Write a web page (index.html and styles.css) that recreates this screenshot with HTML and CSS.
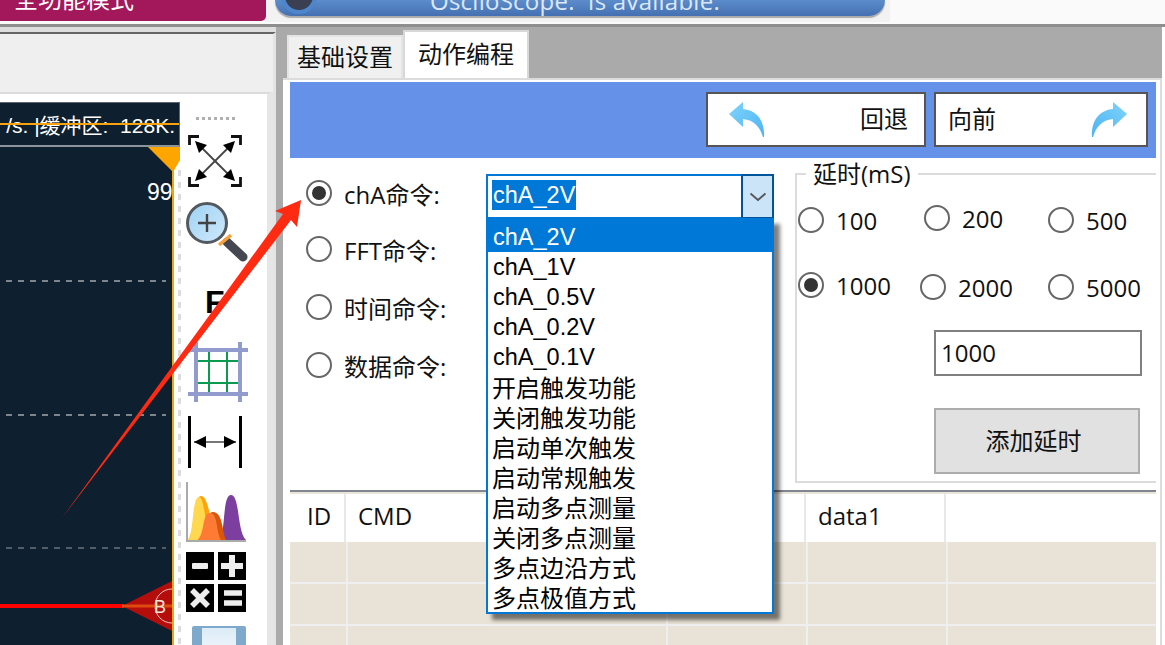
FILE: index.html
```
<!DOCTYPE html>
<html lang="zh">
<head>
<meta charset="utf-8">
<title>动作编程</title>
<link rel="stylesheet" href="styles.css">
</head>
<body>
<div class="page">
  <header class="top">
    <div class="mode"><span>全功能模式</span></div>
    <div class="pill-wrap">
      <div class="pill">
        <span class="pill-dot"></span>
        <span class="pill-text">OsciloScope:&nbsp; Is available.</span>
      </div>
    </div>
    <div class="top-rest"></div>
  </header>

  <main class="main">
    <section class="left">
      <div class="left-head"></div>
      <div class="left-body">
        <div class="scope">
          <div class="scope-head"><span class="scope-info">/s. |缓冲区:&nbsp; 128K.</span></div>
          <div class="chart">
            <span class="chart-val">999</span>
            <span class="grid-line g1"></span>
            <span class="grid-line g2"></span>
            <span class="grid-line g3"></span>
            <span class="trace"></span>
            <svg class="marker" width="54" height="54" viewBox="0 0 54 54">
              <polygon points="0,27 50,2 50,52" fill="#b50c0c"/>
              <circle cx="50" cy="27" r="17" fill="none" stroke="#f0c8c8" stroke-width="1"/>
              <line x1="0" y1="27" x2="54" y2="27" stroke="#e85a10" stroke-width="3" stroke-opacity=".8"/>
              <text x="32" y="34" class="marker-text">B</text>
            </svg>
          </div>
          <svg class="corner" width="32" height="26" viewBox="0 0 32 26"><polygon points="0,0 32,0 32,13 25,25" fill="#ffa500"/></svg>
        </div>
        <div class="tools">
          <div class="dots"></div>
          <svg class="ico ico-expand" width="54" height="52" viewBox="0 0 54 52">
            <g fill="none" stroke="#111" stroke-width="2.8">
              <path d="M1.5 10V1.5H11"/><path d="M43 1.5H52.5V10"/><path d="M1.5 42V50.5H11"/><path d="M43 50.5H52.5V42"/>
            </g>
            <g stroke="#444" stroke-width="1.8"><line x1="9" y1="8" x2="45" y2="44"/><line x1="45" y1="8" x2="9" y2="44"/></g>
            <g fill="#000">
              <polygon points="7,6 19,10 11,18"/><polygon points="47,6 35,10 43,18"/>
              <polygon points="7,46 19,42 11,34"/><polygon points="47,46 35,42 43,34"/>
            </g>
          </svg>
          <svg class="ico ico-zoom" width="62" height="60" viewBox="0 0 62 60">
            <defs><linearGradient id="lens" x1="0" y1="0" x2="1" y2="1"><stop offset="0" stop-color="#9fd3f5"/><stop offset="1" stop-color="#cfe8fa"/></linearGradient></defs>
            <circle cx="21" cy="21" r="19.5" fill="url(#lens)" stroke="#54585f" stroke-width="3"/>
            <path d="M21 12V30M12 21H30" stroke="#444" stroke-width="2.4"/>
            <line x1="41" y1="40" x2="57" y2="55" stroke="#454850" stroke-width="9" stroke-linecap="round"/>
            <line x1="33" y1="43" x2="45" y2="33" stroke="#f7a13c" stroke-width="3.4"/>
          </svg>
          <span class="tool-f">F</span>
          <svg class="ico ico-grid" width="60" height="60" viewBox="0 0 60 60">
            <g stroke="#0a9a50" stroke-width="2"><path d="M21 9V53M39 9V53M10 19H52M10 41H52"/></g>
            <g stroke="#919bcd" stroke-width="4"><path d="M8 0V60M52 0V60M0 8H60M0 52H60"/></g>
          </svg>
          <svg class="ico ico-fit" width="54" height="52" viewBox="0 0 54 52">
            <path d="M1.5 0V52M52.5 0V52" stroke="#000" stroke-width="3"/>
            <line x1="6" y1="26" x2="48" y2="26" stroke="#777" stroke-width="2"/>
            <polygon points="6,26 18,20 18,32" fill="#000"/><polygon points="48,26 36,20 36,32" fill="#000"/>
          </svg>
          <svg class="ico ico-hist" width="60" height="60" viewBox="0 0 60 60">
            <path d="M1 0V59H60" fill="none" stroke="#aaa" stroke-width="2"/>
            <path d="M2 58C9 50 7 14 15 14C24 14 24 50 34 58Z" fill="#ffa30d"/>
            <path d="M2 58C8 50 6 15 13 15C19 15 19 50 26 58Z" fill="#ffd84f"/>
            <path d="M33 58C40 52 36 13 45 13C54 13 51 50 60 58Z" fill="#7c3fa0"/>
            <path d="M12 58C20 50 18 30 27 30C37 30 36 50 40 58Z" fill="#d8570a"/>
            <path d="M12 58C19 50 16 31 24 31C32 31 30 50 35 58Z" fill="#ff7b35"/>
          </svg>
          <div class="calc">
            <span class="key"><svg width="28" height="28" viewBox="0 0 28 28"><rect x="6" y="11" width="16" height="6" rx="1" fill="#eee"/></svg></span>
            <span class="key"><svg width="28" height="28" viewBox="0 0 28 28"><path d="M14 3V25M3 14H25" stroke="#eee" stroke-width="6"/></svg></span>
            <span class="key"><svg width="28" height="28" viewBox="0 0 28 28"><path d="M6 6L22 22M22 6L6 22" stroke="#eee" stroke-width="5.5"/></svg></span>
            <span class="key"><svg width="28" height="28" viewBox="0 0 28 28"><path d="M6 9H24M6 19H24" stroke="#eee" stroke-width="5.5"/></svg></span>
          </div>
          <div class="floppy"><span class="floppy-label"></span></div>
        </div>
      </div>
    </section>

    <section class="right">
      <div class="tabs">
        <div class="tab">基础设置</div>
        <div class="tab tab-active">动作编程</div>
      </div>
      <div class="panel">
        <div class="panel-inner">
          <div class="bluebar">
            <button class="nav nav-back" type="button">
              <svg width="38" height="36" viewBox="0 0 38 36">
                <defs><linearGradient id="arr" x1="0" y1="0" x2="1" y2="1"><stop offset="0" stop-color="#7fd3fb"/><stop offset="1" stop-color="#4db4f2"/></linearGradient></defs>
                <path d="M1 12L15 0V7C28 8 37 18 36 35L35 35C32 25 26 18 15 17V25Z" fill="url(#arr)"/>
              </svg>
              <span>回退</span>
            </button>
            <button class="nav nav-fwd" type="button">
              <span>向前</span>
              <svg width="38" height="36" viewBox="0 0 38 36">
                <defs><linearGradient id="arr2" x1="1" y1="0" x2="0" y2="1"><stop offset="0" stop-color="#7fd3fb"/><stop offset="1" stop-color="#4db4f2"/></linearGradient></defs>
                <path d="M37 12L23 0V7C10 8 1 18 2 35L3 35C6 25 12 18 23 17V25Z" fill="url(#arr2)"/>
              </svg>
            </button>
          </div>

          <div class="form">
            <div class="cmds">
              <label class="rad-row"><span class="radio on"></span><span>chA命令:</span></label>
              <label class="rad-row"><span class="radio"></span><span>FFT命令:</span></label>
              <label class="rad-row"><span class="radio"></span><span>时间命令:</span></label>
              <label class="rad-row"><span class="radio"></span><span>数据命令:</span></label>
            </div>
            <div class="combo">
              <div class="combo-value"><span class="combo-sel">chA_2V</span></div>
              <div class="combo-btn">
                <svg width="18" height="10" viewBox="0 0 18 10"><path d="M1.5 1.5L9 8L16.5 1.5" fill="none" stroke="#555" stroke-width="1.8"/></svg>
              </div>
            </div>
            <div class="delay">
              <div class="delay-legend">延时(mS)</div>
              <div class="drow drow-a">
                <label class="ditem w126"><span class="radio"></span><span>100</span></label>
                <label class="ditem w124 up"><span class="radio"></span><span>200</span></label>
                <label class="ditem"><span class="radio"></span><span>500</span></label>
              </div>
              <div class="drow drow-b">
                <label class="ditem w122 up"><span class="radio on"></span><span>1000</span></label>
                <label class="ditem w128"><span class="radio"></span><span>2000</span></label>
                <label class="ditem"><span class="radio"></span><span>5000</span></label>
              </div>
              <div class="delay-input">1000</div>
              <button class="delay-add" type="button">添加延时</button>
            </div>

            <ul class="dropdown">
              <li class="active">chA_2V</li>
              <li>chA_1V</li>
              <li>chA_0.5V</li>
              <li>chA_0.2V</li>
              <li>chA_0.1V</li>
              <li class="cn">开启触发功能</li>
              <li class="cn">关闭触发功能</li>
              <li class="cn">启动单次触发</li>
              <li class="cn">启动常规触发</li>
              <li class="cn">启动多点测量</li>
              <li class="cn">关闭多点测量</li>
              <li class="cn">多点边沿方式</li>
              <li class="cn">多点极值方式</li>
            </ul>
          </div>

          <div class="table">
            <div class="thead">
              <div class="th">ID</div>
              <div class="th th-cmd">CMD</div>
              <div class="th"></div>
              <div class="th th-data">data1</div>
              <div class="th th-end"></div>
            </div>
            <div class="tr"><i></i><i></i><i></i><i></i><i></i></div>
            <div class="tr"><i></i><i></i><i></i><i></i><i></i></div>
            <div class="tr"><i></i><i></i><i></i><i></i><i></i></div>
          </div>
        </div>
      </div>
    </section>
  </main>

  <svg class="annot" width="1165" height="645" viewBox="0 0 1165 645">
    <polygon points="62,518 283,214 275,211 301,200 297,227 291,220" fill="#ff2a12"/>
  </svg>
</div>
</body>
</html>
```
FILE: styles.css
```
* { box-sizing: border-box; }
html, body { margin: 0; padding: 0; }
body {
  width: 1165px;
  height: 645px;
  overflow: hidden;
  background: #fff;
  font-family: "Open Sans", "Noto Sans CJK SC", sans-serif;
  font-size: 24px;
  color: #111;
}
.page { position: relative; width: 1165px; height: 645px; overflow: hidden; }

/* top strip */
.top { display: flex; height: 24px; background: #fafafa; overflow: hidden; }
.mode {
  width: 266px; height: 21px; flex: none;
  background: #a3175b; border-bottom-right-radius: 5px;
  padding-left: 14px; color: #fff; font-size: 24px; line-height: 24px;
  overflow: hidden;
}
.mode span { display: block; margin-top: -13px; }
.pill-wrap { width: 624px; height: 22px; flex: none; background: #f2f2f2; padding-left: 9px; }
.pill {
  width: 610px; height: 16px;
  border-radius: 0 0 18px 18px;
  background: linear-gradient(#5c8ccb, #4470b2);
  box-shadow: 0 2px 1px #aaa;
  display: flex; overflow: hidden; position: relative;
}
.pill-dot {
  width: 36px; height: 36px; margin: -22px 0 0 6px; flex: none;
  border-radius: 50%; background: #3b3f52; border: 4px solid #4d86cc;
}
.pill-text {
  margin-left: 113px; color: #dce8f7; font-family: "Open Sans", sans-serif;
  font-size: 24px; letter-spacing: .25px; line-height: 20px; margin-top: -9px; white-space: nowrap;
}
.top-rest { flex: 1; }

/* main */
.main { display: flex; height: 621px; border-top: 3px solid #8e8e8e; background: #dedede; }

/* left */
.left { width: 276px; flex: none; display: flex; flex-direction: column; margin-top: 5px; border-right: 3px solid #e4e4e4; border-top: 2px solid #666; background: #efefef; position: relative; }
.left-head { height: 58px; flex: none; }
.left-body {
  flex: 1; display: flex; width: 273px;
  background: #fff;
  border-top: 2px solid #dcdcdc;
  border-right: 6px solid #e6e6e6;
  padding-top: 8px;
}
.scope { width: 180px; flex: none; position: relative; display: flex; flex-direction: column; }
.scope-head {
  height: 45px; flex: none;
  background: #0e1f30;
  border-top: 1px solid #5b6670;
  border-right: 1px solid #5b6670;
  border-bottom: 2px solid #8c949b;
  display: flex; justify-content: flex-end; align-items: center;
  overflow: hidden; position: relative;
  padding-right: 4px; color: #fff; font-size: 21px; white-space: nowrap;
  font-family: "Liberation Sans", "Noto Sans CJK SC", sans-serif;
}
.scope-head::after {
  content: ""; position: absolute; left: 0; right: 0; top: 20px; height: 2px; background: #f7a30f;
}
.chart {
  flex: 1; width: 174px; background: #0e1f30; border-right: 2px solid #efa416;
  position: relative; overflow: hidden;
}
.chart-val { position: absolute; left: 147px; top: 31px; color: #fff; font-size: 23px; line-height: 28px; font-family: "Liberation Sans", sans-serif; }
.grid-line {
  position: absolute; left: 6px; width: 160px; height: 2px;
  background: repeating-linear-gradient(90deg, #7d868d 0 6px, transparent 6px 12px);
}
.g1 { top: 133px; }
.g2 { top: 267px; }
.g3 { top: 400px; opacity: .6; }
.trace { position: absolute; left: 0; top: 457px; width: 124px; height: 4px; background: #ff0000; }
.marker { position: absolute; left: 122px; top: 432px; }
.marker-text { fill: #f6e6d8; font: 18px "Liberation Sans", sans-serif; }
.corner { position: absolute; left: 148px; top: 45px; }

.tools { position: relative; flex: 1; display: flex; flex-direction: column; align-items: flex-start; padding-left: 6px; min-width: 0; }
.tools::before {
  content: ""; position: absolute; left: -2px; top: 68px; bottom: 0; width: 3px;
  background: repeating-linear-gradient(#dcdcdc 0 6px, transparent 6px 12px);
}
.ico { display: block; flex: none; overflow: visible; }
.dots {
  width: 42px; height: 3px; margin: 15px 0 0 10px; flex: none;
  background: repeating-linear-gradient(90deg, #b0b0b0 0 3px, transparent 3px 6px);
}
.ico-expand { margin: 15px 0 0 2px; }
.ico-zoom { margin-top: 15px; }
.tool-f { font: bold 32px/32px "Liberation Sans", sans-serif; color: #000; margin: 24px 0 0 19px; flex: none; }
.ico-grid { margin: 24px 0 0 2px; }
.ico-fit { margin: 14px 0 0 2px; }
.ico-hist { margin-top: 14px; }
.calc { display: grid; grid-template-columns: 28px 28px; gap: 4px; margin-top: 10px; flex: none; }
.key { width: 28px; height: 28px; background: #000; display: block; }
.key svg { display: block; }
.floppy { width: 54px; height: 30px; margin: 14px 0 0 6px; flex: none; background: #7fa9cb; border-radius: 2px 2px 0 0; padding: 2px 10px 0; }
.floppy-label { display: block; height: 100%; background: linear-gradient(#dcebf6, #f3f8fc); }

/* right */
.right { width: 889px; flex: none; display: flex; flex-direction: column; background: #fff; }
.tabs { height: 51px; flex: none; background: #aaa; margin-right: 3px; display: flex; align-items: flex-end; padding-left: 11px; }
.tab {
  width: 116px; height: 43px; background: #f0f0f0; border: 2px solid #e4e4e4; border-bottom: 0;
  font-family: "Noto Sans CJK SC", sans-serif; font-size: 24px; line-height: 38px; text-align: center; color: #111;
  white-space: nowrap;
}
.tab-active { width: 126px; height: 48px; background: #fff; border-color: #d8d8d8; line-height: 42px; }
.panel { flex: 1; margin-right: 3px; border-left: 7px solid #aaa; border-right: 2px solid #dcdcdc; min-height: 0; background: #fff; }
.panel-inner { height: 100%; border-top: 2px solid #dcdcdc; padding: 2px 4px 0 7px; display: flex; flex-direction: column; }

.bluebar { height: 76px; flex: none; background: #6592e8; display: flex; justify-content: flex-end; gap: 8px; padding: 10px 8px 0; }
.nav {
  height: 55px; background: #fff; border: 2px solid #555; padding: 0;
  display: flex; align-items: center; justify-content: space-between;
  font-family: "Noto Sans CJK SC", sans-serif; font-size: 24px; color: #111;
}
.nav span { margin-bottom: 4px; }
.nav-back { width: 220px; padding: 0 16px 0 20px; }
.nav-fwd { width: 214px; padding: 0 18px 0 12px; }

.form { height: 332px; flex: none; display: flex; position: relative; }
.cmds { width: 196px; flex: none; padding: 7px 0 0 16px; display: grid; grid-template-rows: 56px 56px 60px 56px; align-content: start; }
.rad-row { display: flex; align-items: center; gap: 12px; white-space: nowrap; }
.radio { width: 26px; height: 26px; flex: none; border-radius: 50%; border: 2px solid #666; background: #fff; display: block; position: relative; }
.radio.on::after { content: ""; position: absolute; left: 4px; top: 4px; width: 14px; height: 14px; border-radius: 50%; background: #333; }

.combo { width: 288px; height: 45px; flex: none; margin-top: 16px; border: 2px solid #0078d7; display: flex; background: #fff; }
.combo-value { flex: 1; padding: 4px; }
.combo-sel {
  display: block; width: 84px; height: 30px; background: #0078d7; color: #fff;
  font-family: "Liberation Sans", sans-serif; font-size: 23.5px; line-height: 30px; padding-left: 1px; white-space: nowrap; overflow: hidden;
}
.combo-btn { width: 33px; margin: -2px -2px -2px 0; background: #cce4f7; border: 2px solid #005499; display: flex; align-items: center; justify-content: center; }

.delay { width: 361px; height: 310px; flex: none; margin: 15px 0 0 21px; border: 2px solid #dcdcdc; border-right: 0; position: relative; }
.delay-legend { position: absolute; left: 9px; top: -15px; background: #fff; padding: 0 7px; font-size: 24px; line-height: 28px; white-space: nowrap; }
.drow { display: flex; align-items: flex-start; padding-left: 1px; }
.drow-a { margin-top: 30px; height: 32px; }
.drow-b { margin-top: 35px; height: 32px; }
.ditem { display: flex; align-items: center; gap: 12px; height: 30px; white-space: nowrap; }
.w126 { width: 126px; }
.w124 { width: 124px; }
.w122 { width: 122px; }
.w128 { width: 128px; }
.up { margin-top: -2px; }
.delay-input { width: 208px; height: 46px; margin: 26px 0 0 137px; border: 2px solid #808080; background: #fff; padding-left: 5px; line-height: 42px; font-size: 24px; }
.delay-add {
  display: block; width: 206px; height: 66px; margin: 32px 0 0 137px; padding: 0 7px 4px 0;
  background: #e1e1e1; border: 2px solid #adadad; color: #111;
  font-family: "Noto Sans CJK SC", sans-serif; font-size: 24px;
}

.dropdown {
  list-style: none; margin: 0; padding: 0;
  position: absolute; left: 196px; top: 60px; width: 288px; height: 396px;
  background: #fff; border: 2px solid #0078d7; box-shadow: 6px 6px 4px rgba(0,0,0,.5);
  font-family: "Liberation Sans", "Noto Sans CJK SC", sans-serif; font-size: 23.5px; color: #000; z-index: 5;
}
.dropdown li { height: 30px; line-height: 30px; padding-left: 5px; white-space: nowrap; }
.dropdown li.active { height: 32px; line-height: 34px; background: #0078d7; color: #fff; }
.dropdown li.cn { font-size: 24px; line-height: 34px; padding-left: 4px; }

.table { flex: 1; min-height: 0; border-top: 2px solid #808590; overflow: hidden; }
.thead { height: 50px; display: grid; grid-template-columns: 56px 322px 138px 140px 1fr; background: #fff; border-top: 2px solid #ebe4d9; }
.th { border-right: 2px solid #e8e8e8; line-height: 44px; padding-left: 17px; white-space: nowrap; }
.th-cmd { padding-left: 12px; }
.th-data { padding-left: 12px; }
.th-end { border-right: 0; }
.tr { height: 42px; display: grid; grid-template-columns: 58px 320px 140px 140px 1fr; background: #e9e2d6; }
.tr i { display: block; border-right: 2px solid #efefef; border-bottom: 2px solid #efefef; }
.tr i:last-child { border-right: 0; }

.annot { position: absolute; left: 0; top: 0; pointer-events: none; z-index: 20; }
```
